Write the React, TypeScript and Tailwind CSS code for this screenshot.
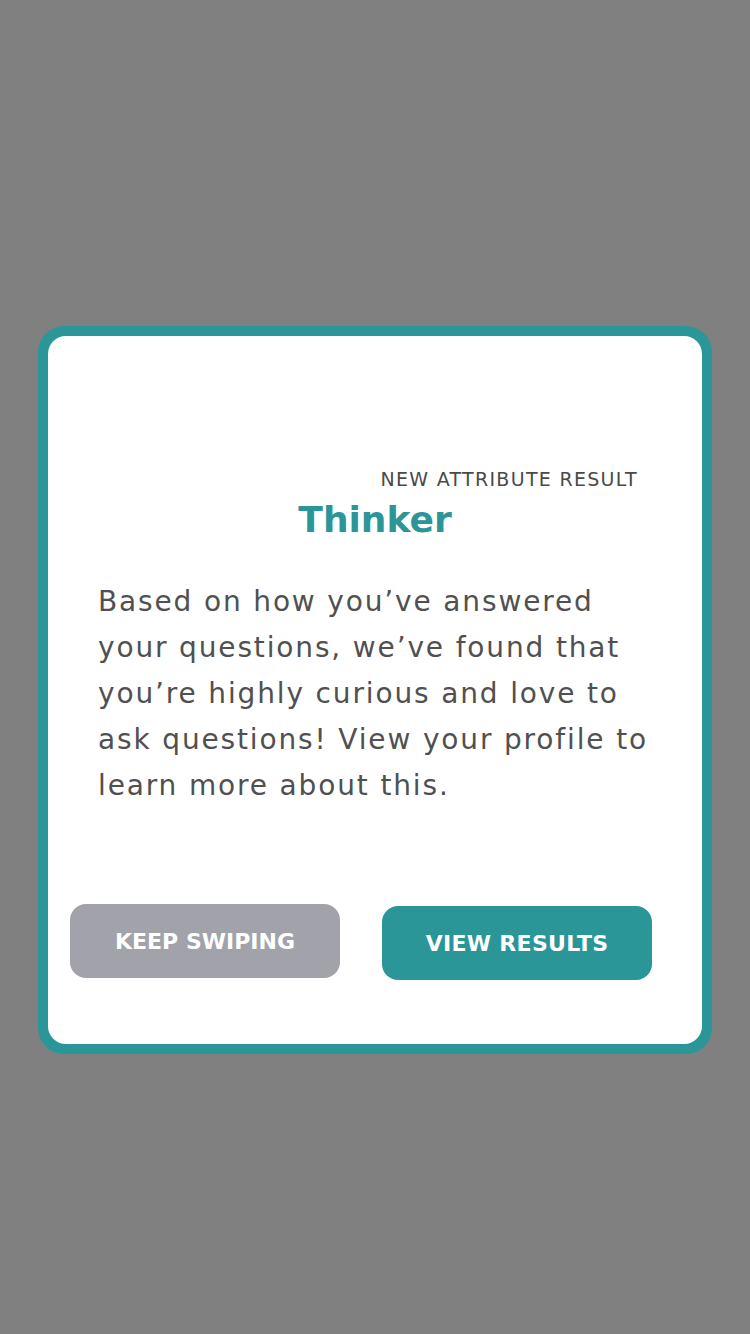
export default function App() {
  return (
    <div className="w-[750px] h-[1334px] bg-[#808080] flex flex-col pt-[326px]" style={{ fontFamily: '"DejaVu Sans", "Liberation Sans", sans-serif' }}>
      <div className="ml-[38px] w-[674px] h-[728px] rounded-[26px] bg-[#2a9698] p-[10px]">
        <div className="w-full h-full rounded-[18px] bg-white flex flex-col">
          <div className="mt-[131px] mr-[64px] text-right text-[19px] leading-[24px] text-[#4a4a4a] tracking-[1.3px]">NEW ATTRIBUTE RESULT</div>
          <div className="mt-[6px] text-center text-[36px] leading-[46px] font-bold text-[#2a9698]">Thinker</div>
          <p className="mt-[36px] ml-[50px] text-[28px] leading-[46px] text-[#505050] tracking-[1.85px] whitespace-nowrap">
            Based on how you’ve answered<br />
            your questions, we’ve found that<br />
            you’re highly curious and love to<br />
            ask questions! View your profile to<br />
            learn more about this.
          </p>
          <div className="mt-[95px] flex items-start">
            <button className="ml-[22px] w-[270px] h-[74px] rounded-[16px] bg-[#a2a2aa] text-white text-[22px] font-bold">KEEP SWIPING</button>
            <button className="ml-[42px] mt-[2px] w-[270px] h-[74px] rounded-[16px] bg-[#2a9698] text-white text-[22px] font-bold tracking-[0.3px]">VIEW RESULTS</button>
          </div>
        </div>
      </div>
    </div>
  );
}
